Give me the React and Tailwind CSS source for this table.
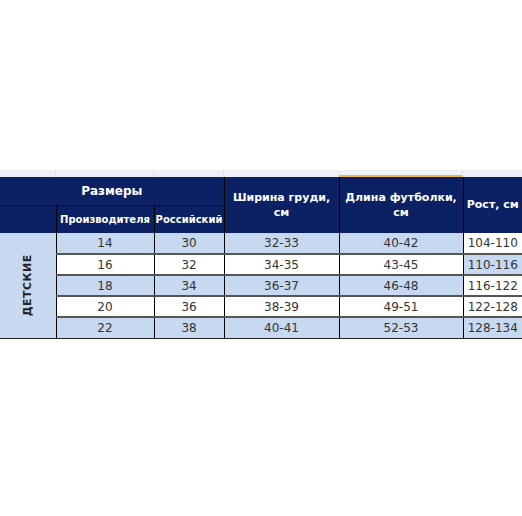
import React from "react";

const rows = [
  ["14", "30", "32-33", "40-42", "104-110"],
  ["16", "32", "34-35", "43-45", "110-116"],
  ["18", "34", "36-37", "46-48", "116-122"],
  ["20", "36", "38-39", "49-51", "122-128"],
  ["22", "38", "40-41", "52-53", "128-134"],
];
const lastBlue = [false, true, false, false, true];

export default function App() {
  const font = { fontFamily: '"DejaVu Sans", Verdana, sans-serif' };
  return (
    <div className="w-[522px] h-[516px] bg-white" style={font}>
      <div className="h-[170px]" />
      <div className="h-[7px] bg-[#eef2f7] grid grid-cols-[56px_98px_70px_115px_124px_59px]">
        <div className="border-r border-[#dde3ea]" />
        <div className="border-r border-[#dde3ea]" />
        <div className="border-r border-[#dde3ea]" />
        <div className="border-r border-[#dde3ea]" />
        <div className="border-r border-[#dde3ea] border-b-2 border-b-[#f0b25a]" />
        <div />
      </div>
      <table className="table-fixed border-collapse w-[522px] text-center">
        <colgroup>
          <col className="w-[56px]" />
          <col className="w-[98px]" />
          <col className="w-[70px]" />
          <col className="w-[115px]" />
          <col className="w-[124px]" />
          <col className="w-[59px]" />
        </colgroup>
        <thead>
          <tr className="h-[28px] bg-[#0c2163] text-white font-bold text-[11px]">
            <th colSpan={3} className="border-b border-b-[#050f33] border-r border-r-black p-0 text-[12px]">
              Размеры
            </th>
            <th rowSpan={2} className="border-r border-black p-0 leading-[15px]">
              Ширина груди,<br />см
            </th>
            <th rowSpan={2} className="border-r border-black p-0 leading-[15px]">
              Длина футболки,<br />см
            </th>
            <th rowSpan={2} className="p-0 whitespace-nowrap">
              Рост, см
            </th>
          </tr>
          <tr className="h-[28px] bg-[#0c2163] text-white font-bold text-[10px]">
            <th className="border-r border-black p-0" />
            <th className="border-r border-black p-0 whitespace-nowrap">Производителя</th>
            <th className="border-r border-black p-0 whitespace-nowrap">Российский</th>
          </tr>
        </thead>
        <tbody className="text-[12px] text-[#333]">
          {rows.map((r, i) => {
            const blue = i % 2 === 0;
            const bg = blue ? "bg-[#c6d9f0]" : "bg-white";
            const rowBorder = i < 4 ? "border-b-2 border-b-[#555]" : "border-b border-b-[#222]";
            return (
              <tr key={i} className="h-[21px]">
                {i === 0 && (
                  <td rowSpan={5} className="bg-[#c6d9f0] border-r border-black border-b border-b-[#222] p-0">
                    <div className="flex items-center justify-center">
                      <span className="-rotate-90 font-bold text-[11px] text-[#222] whitespace-nowrap tracking-[0.5px]">
                        ДЕТСКИЕ
                      </span>
                    </div>
                  </td>
                )}
                <td className={`${bg} ${rowBorder} border-r border-r-black p-0`}>{r[0]}</td>
                <td className={`${bg} ${rowBorder} border-r border-r-black p-0`}>{r[1]}</td>
                <td className={`${bg} ${rowBorder} border-r border-r-black p-0`}>{r[2]}</td>
                <td className={`${bg} ${rowBorder} border-r border-r-black p-0`}>{r[3]}</td>
                <td className={`${lastBlue[i] ? "bg-[#c6d9f0]" : "bg-white"} ${rowBorder} p-0`}>{r[4]}</td>
              </tr>
            );
          })}
        </tbody>
      </table>
    </div>
  );
}
